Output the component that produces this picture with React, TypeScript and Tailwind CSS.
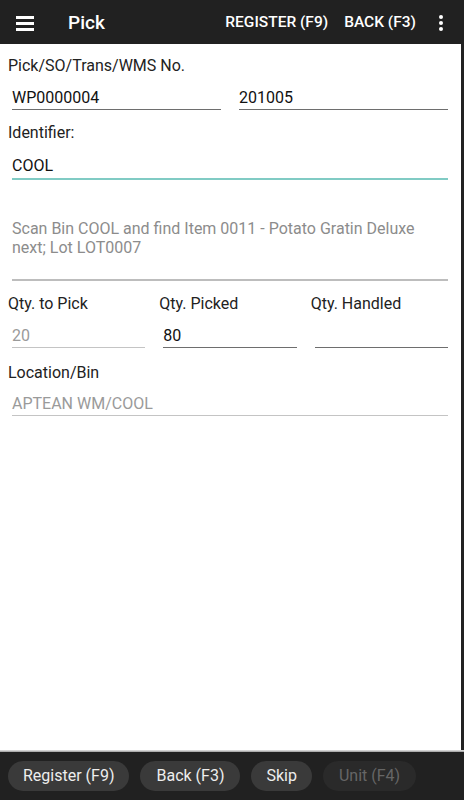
import React from "react";

const font = { fontFamily: "Roboto, 'Liberation Sans', sans-serif" };

const Field = ({
  value,
  muted,
  line = "bg-[#6e6e6e]",
}: {
  value: string;
  muted?: boolean;
  line?: string;
}) => (
  <div className="flex-1 px-1">
    <div
      className={`h-5 leading-5 text-[16px] ${muted ? "text-[#9a9a9a]" : "text-[#111]"}`}
    >
      {value}
    </div>
    <div className={`mt-[1px] h-[1px] ${line}`} />
  </div>
);

const App = () => {
  return (
    <div className="w-[464px] h-[800px] flex flex-col bg-white" style={font}>
      {/* Top bar */}
      <div className="h-[44px] pt-[2px] bg-[#212121] flex items-center text-white shrink-0">
        <div className="ml-4 w-[18px] flex flex-col gap-[3px]">
          <span className="h-[3px] bg-white" />
          <span className="h-[3px] bg-white" />
          <span className="h-[3px] bg-white" />
        </div>
        <div className="ml-[34px] text-[19px] font-medium">Pick</div>
        <div className="ml-auto text-[15.5px] font-medium">REGISTER (F9)</div>
        <div className="ml-4 text-[15.5px] font-medium">BACK (F3)</div>
        <div className="ml-[23px] mr-[21px] flex flex-col gap-[2px]">
          <span className="w-1 h-1 rounded-full bg-white" />
          <span className="w-1 h-1 rounded-full bg-white" />
          <span className="w-1 h-1 rounded-full bg-white" />
        </div>
      </div>

      {/* Form */}
      <div className="flex-1 border-r-[3px] border-[#222] px-2 text-[#222] text-[16px]">
        <div className="mt-3 h-5 leading-5">Pick/SO/Trans/WMS No.</div>
        <div className="mt-3 flex gap-[10px] pr-[1px]">
          <Field value="WP0000004" />
          <Field value="201005" />
        </div>

        <div className="mt-[13px] h-5 leading-5">Identifier:</div>
        <div className="mt-[13px] pr-[1px] flex">
          <div className="flex-1 px-1">
            <div className="h-5 leading-5 text-[#111]">COOL</div>
            <div className="mt-[2px] h-[2px] bg-[#80cbc4]" />
          </div>
        </div>

        <div className="mt-[39px] pr-[1px] flex">
          <div className="flex-1 px-1">
            <div className="leading-[19px] text-[#8c8c8c] h-[60px]">
              Scan Bin COOL and find Item 0011 - Potato Gratin Deluxe next; Lot LOT0007
            </div>
            <div className="h-[2px] bg-[#bdbdbd]" />
          </div>
        </div>

        <div className="mt-[13px] pr-[1px] flex gap-[10px]">
          <div className="flex-1 h-5 leading-5">Qty. to Pick</div>
          <div className="flex-1 h-5 leading-5">Qty. Picked</div>
          <div className="flex-1 h-5 leading-5">Qty. Handled</div>
        </div>
        <div className="mt-3 flex gap-[10px] pr-[1px]">
          <Field value="20" muted line="bg-[#c4c4c4]" />
          <Field value="80" />
          <Field value="" />
        </div>

        <div className="mt-[15px] h-5 leading-5">Location/Bin</div>
        <div className="mt-[11px] flex pr-[1px]">
          <Field value="APTEAN WM/COOL" muted line="bg-[#c4c4c4]" />
        </div>
      </div>

      {/* Bottom bar */}
      <div className="h-[2px] bg-gradient-to-b from-[#e6e6e6] to-[#9a9a9a] shrink-0" />
      <div className="h-[48px] bg-[#212121] flex items-center gap-[11px] pl-2 shrink-0">
        <button className="h-[30px] rounded-full bg-[#3a3a3a] px-[15px] text-[16px] text-[#ededed]">
          Register (F9)
        </button>
        <button className="h-[30px] rounded-full bg-[#3a3a3a] px-[16px] text-[16px] text-[#ededed]">
          Back (F3)
        </button>
        <button className="h-[30px] rounded-full bg-[#3a3a3a] px-[15px] text-[16px] text-[#ededed]">
          Skip
        </button>
        <button className="h-[30px] rounded-full bg-[#2a2a2a] px-[16px] text-[16px] text-[#666]">
          Unit (F4)
        </button>
      </div>
    </div>
  );
};

export default App;
